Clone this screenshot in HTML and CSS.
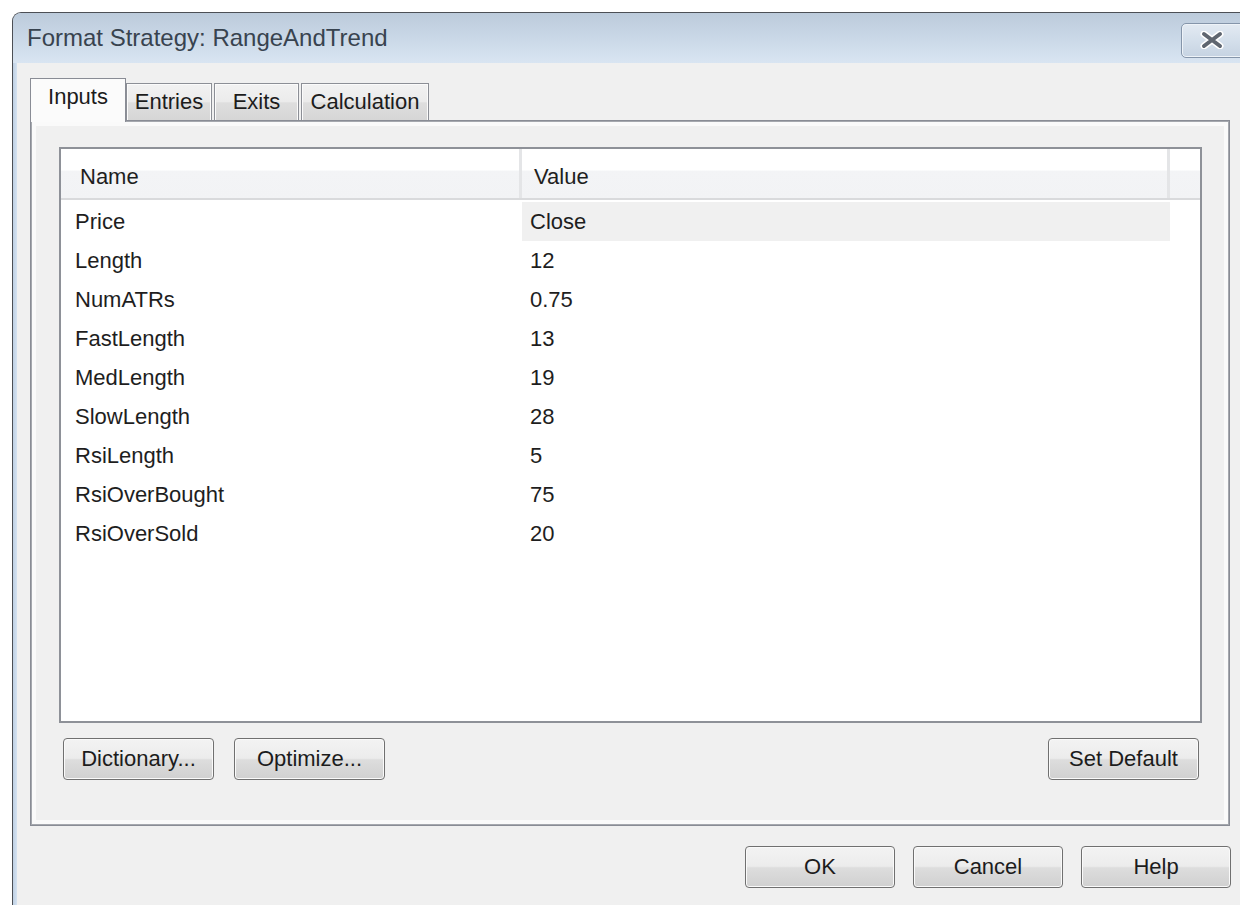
FILE: index.html
```html
<!DOCTYPE html>
<html lang="en">
<head>
<meta charset="utf-8">
<title>Format Strategy: RangeAndTrend</title>
<link rel="stylesheet" href="styles.css">
</head>
<body>
<div class="window">
  <div class="titlebar">
    <span class="title">Format Strategy: RangeAndTrend</span>
    <button class="close" type="button" aria-label="Close">
      <svg width="26" height="18" viewBox="0 0 26 18" aria-hidden="true">
        <path d="M5 3 L21 15 M21 3 L5 15" stroke="#ffffff" stroke-width="7" stroke-linecap="round"/>
        <path d="M5 3 L21 15 M21 3 L5 15" stroke="#5f6670" stroke-width="4" stroke-linecap="round"/>
      </svg>
    </button>
  </div>
  <div class="client">
    <div class="tabs">
      <div class="tab tab-active tab-inputs">Inputs</div>
      <div class="tab tab-entries">Entries</div>
      <div class="tab tab-exits">Exits</div>
      <div class="tab tab-calc">Calculation</div>
    </div>
    <div class="panel">
      <div class="listbox">
        <div class="list-header">
          <div class="hcell hcell-name">Name</div>
          <div class="hcell hcell-value">Value</div>
          <div class="hcell hcell-fill"></div>
        </div>
        <div class="rows">
          <div class="row"><span class="cell-name">Price</span><span class="cell-value selected">Close</span></div>
          <div class="row"><span class="cell-name">Length</span><span class="cell-value">12</span></div>
          <div class="row"><span class="cell-name">NumATRs</span><span class="cell-value">0.75</span></div>
          <div class="row"><span class="cell-name">FastLength</span><span class="cell-value">13</span></div>
          <div class="row"><span class="cell-name">MedLength</span><span class="cell-value">19</span></div>
          <div class="row"><span class="cell-name">SlowLength</span><span class="cell-value">28</span></div>
          <div class="row"><span class="cell-name">RsiLength</span><span class="cell-value">5</span></div>
          <div class="row"><span class="cell-name">RsiOverBought</span><span class="cell-value">75</span></div>
          <div class="row"><span class="cell-name">RsiOverSold</span><span class="cell-value">20</span></div>
        </div>
      </div>
      <div class="panel-buttons">
        <button class="btn" type="button">Dictionary...</button>
        <button class="btn" type="button">Optimize...</button>
        <span class="spacer"></span>
        <button class="btn" type="button">Set Default</button>
      </div>
    </div>
    <div class="dialog-buttons">
      <button class="btn" type="button">OK</button>
      <button class="btn" type="button">Cancel</button>
      <button class="btn" type="button">Help</button>
    </div>
  </div>
</div>
</body>
</html>
```
FILE: styles.css
```css
html, body {
  margin: 0;
  padding: 0;
  background: #ffffff;
  width: 1240px;
  height: 905px;
  overflow: hidden;
  font-family: "Liberation Sans", Arial, sans-serif;
}

/* window frame, running off the right and bottom edges */
.window {
  margin: 12px 0 0 12px;
  width: 1228px;
  height: 893px;
  overflow: hidden;
  border-top: 1px solid #4c4f55;
  border-left: 1px solid #4c4f55;
  border-top-left-radius: 9px;
  background: linear-gradient(to right, #bfd0e3 0px, #d4e2f1 4px);
  box-sizing: border-box;
  display: flex;
  flex-direction: column;
}

.titlebar {
  height: 50px;
  flex: none;
  display: flex;
  align-items: center;
  padding-left: 14px;
  background: linear-gradient(to bottom, #bccbdb 0%, #cbd9e8 55%, #d9e5f2 100%);
  border-top-left-radius: 8px;
}

.title {
  font-size: 24px;
  color: #38434f;
  flex: 1;
}

.close {
  flex: none;
  margin-right: -12px;
  margin-top: 4px;
  width: 71px;
  height: 35px;
  border: 1px solid #8595aa;
  border-radius: 5px;
  background: linear-gradient(to bottom, #e3eaf2 0%, #d4dfeb 50%, #c6d3e2 100%);
  box-shadow: inset 0 0 0 1px #eef3f8;
  padding: 0 0 0 17px;
  display: flex;
  align-items: center;
  justify-content: flex-start;
}

.client {
  flex: 1;
  margin-left: 4px;
  background: #f0f0f0;
  padding: 15px 0 0 13px;
}

/* tab strip */
.tabs {
  display: flex;
  align-items: flex-end;
  height: 42px;
  position: relative;
  z-index: 1;
}

.tab {
  height: 37px;
  box-sizing: border-box;
  border: 1px solid #8c8f96;
  border-bottom: none;
  background: linear-gradient(to bottom, #f2f2f2 0%, #ebebeb 50%, #dedede 52%, #d6d6d6 100%);
  box-shadow: inset 1px 1px 0 #fbfbfb, inset -1px 0 0 #fbfbfb;
  font-size: 22px;
  color: #1c1c1c;
  display: flex;
  align-items: center;
  justify-content: center;
  padding-bottom: 1px;
  margin-left: 2px;
}

.tab-active {
  height: 44px;
  margin-bottom: -2px;
  margin-left: 0;
  background: #fbfbfb;
  box-shadow: none;
  padding-bottom: 8px;
  border-color: #898c95;
}

.tab-inputs { width: 96px; }
.tab-entries { width: 86px; margin-left: 0; }
.tab-exits { width: 85px; }
.tab-calc { width: 128px; }

/* tab page */
.panel {
  width: 1200px;
  height: 706px;
  box-sizing: border-box;
  border: 1px solid #898c95;
  box-shadow: inset 0 0 0 1px #a5a8ae, inset 0 0 0 5px #fafafa;
  background: #f0f0f0;
  padding: 26px 0 0 28px;
}

.listbox {
  width: 1143px;
  height: 576px;
  box-sizing: border-box;
  border: 2px solid #8e9198;
  background: #ffffff;
  display: flex;
  flex-direction: column;
}

.list-header {
  display: flex;
  height: 51px;
  flex: none;
  box-sizing: border-box;
  border-bottom: 2px solid #d9dadc;
  background: linear-gradient(to bottom, #ffffff 0%, #ffffff 43%, #f3f4f6 45%, #f2f3f5 100%);
}

.hcell {
  font-size: 22px;
  color: #1e1e1e;
  display: flex;
  align-items: center;
  padding-top: 6px;
  box-sizing: border-box;
}

.hcell-name {
  width: 461px;
  padding-left: 19px;
  border-right: 3px solid #e4e5e7;
}

.hcell-value {
  width: 648px;
  padding-left: 12px;
  border-right: 3px solid #e4e5e7;
}

.hcell-fill {
  flex: 1;
}

.rows {
  display: flex;
  flex-direction: column;
  padding-top: 2px;
}

.row {
  display: flex;
  height: 39px;
  align-items: stretch;
  font-size: 22px;
  color: #1e1e1e;
}

.cell-name {
  width: 461px;
  padding-left: 14px;
  box-sizing: border-box;
  display: flex;
  align-items: center;
}

.cell-value {
  width: 648px;
  padding-left: 8px;
  box-sizing: border-box;
  display: flex;
  align-items: center;
}

.cell-value.selected {
  background: #f0f0f0;
}

/* push buttons */
.btn {
  width: 151px;
  height: 42px;
  box-sizing: border-box;
  border: 1px solid #707070;
  border-radius: 4px;
  background: linear-gradient(to bottom, #f3f3f3 0%, #ececec 48%, #dddddd 52%, #d0d0d0 100%);
  box-shadow: inset 0 0 0 1px #fafafa;
  font-family: "Liberation Sans", Arial, sans-serif;
  font-size: 22px;
  color: #1c1c1c;
  padding: 0;
}

.panel-buttons {
  display: flex;
  gap: 20px;
  margin-top: 15px;
  margin-left: 4px;
  width: 1136px;
}

.spacer {
  flex: 1;
}

.dialog-buttons {
  display: flex;
  gap: 18px;
  margin-top: 20px;
  padding-left: 715px;
}

.dialog-buttons .btn {
  width: 150px;
}
```
